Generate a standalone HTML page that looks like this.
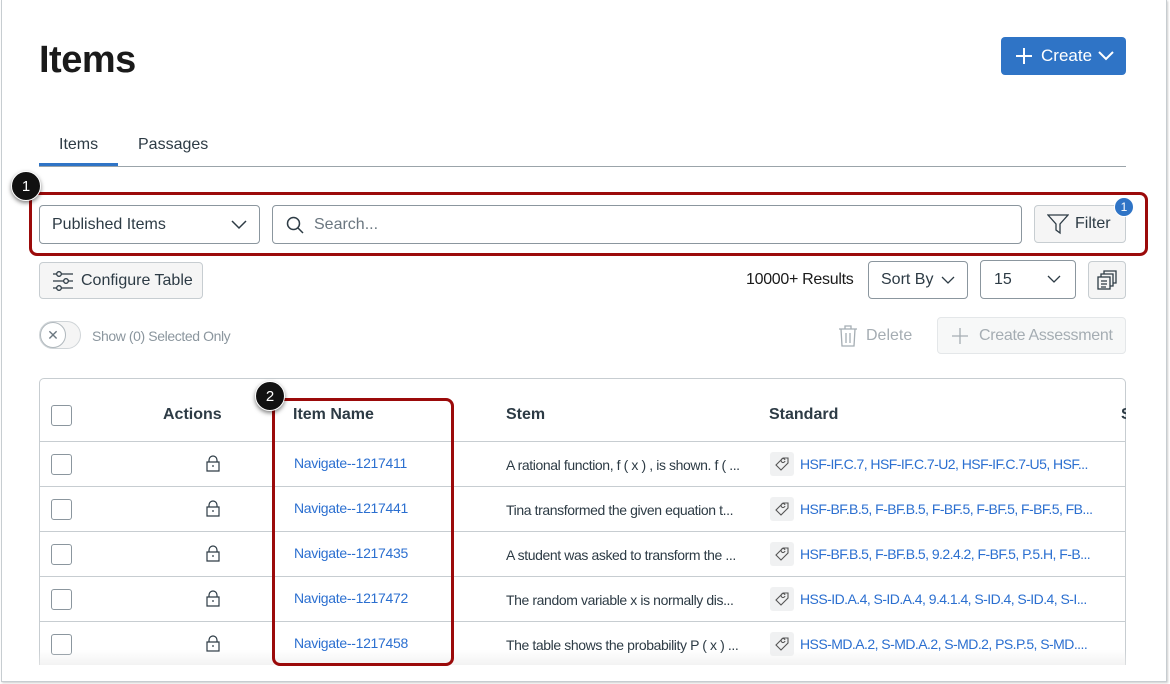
<!DOCTYPE html>
<html><head><style>
*{box-sizing:border-box;margin:0;padding:0}
html,body{width:1170px;height:684px;overflow:hidden}
body{background:#fff;font-family:"Liberation Sans",sans-serif;color:#2d3b45;position:relative}
.a{position:absolute}
.frame{left:1px;top:0;width:1166px;height:682px;border:1px solid #c7cdd1;border-top:none;box-shadow:1px 1px 2px rgba(0,0,0,.2)}
.btn{border:1px solid #c7cdd1;border-radius:4px;background:#f5f5f5;font-size:16px;display:flex;align-items:center}
.sel{border:1px solid #8b969e;border-radius:4px;background:#fff;font-size:16px;display:flex;align-items:center}
.badge{width:30px;height:30px;border-radius:50%;background:#111;color:#fff;font-size:15px;display:flex;align-items:center;justify-content:center;box-shadow:0 2px 4px rgba(0,0,0,.5);border:1.5px solid #fff}
.red{border:3px solid #9b0a0a;border-radius:8px}
.row{left:40px;width:1086px;height:44px;border-top:1px solid #c7cdd1}
.cb{position:absolute;left:11px;width:21px;height:21px;border:1px solid #8b969e;border-radius:3px;background:#fff}
.lnk{color:#2b6fd0;font-size:14px;letter-spacing:-0.3px}
.stem{font-size:14px;color:#2d3b45;letter-spacing:-0.4px}
.tag{width:24px;height:24px;background:#f0f1f2;border-radius:3px}
</style></head><body>
<div class="a frame"></div>
<div class="a" style="left:39px;top:39px;font-size:38px;font-weight:bold;color:#1a1a1a;letter-spacing:-0.5px">Items</div>
<div class="a" style="left:1001px;top:37px;width:125px;height:38px;background:#2f74c6;border-radius:4px;color:#fff;font-size:17px;display:flex;align-items:center;padding-left:14px">
<svg width="18" height="18" viewBox="0 0 18 18"><path d="M9 1v16M1 9h16" stroke="#fff" stroke-width="2"/></svg><span style="margin-left:8px">Create</span>
<svg width="16" height="10" viewBox="0 0 16 10" style="margin-left:6px"><path d="M1 1l7 7 7-7" stroke="#fff" stroke-width="2" fill="none"/></svg></div>
<div class="a" style="left:59px;top:136px;font-size:16px">Items</div>
<div class="a" style="left:138px;top:136px;font-size:16px">Passages</div>
<div class="a" style="left:39px;top:163px;width:79px;height:4px;background:#2f74c6"></div>
<div class="a" style="left:39px;top:166px;width:1087px;height:1px;background:#9ba4aa"></div>
<div class="a red" style="left:29px;top:192px;width:1119px;height:64px"></div>
<div class="a badge" style="left:11px;top:171px">1</div>
<div class="a sel" style="left:39px;top:205px;width:221px;height:39px;padding-left:12px;justify-content:space-between;padding-right:12px"><span>Published Items</span><svg width="16" height="10"><path d="M1 1l7 7 7-7" stroke="#2d3b45" stroke-width="1.5" fill="none"/></svg></div>
<div class="a sel" style="left:272px;top:205px;width:750px;height:39px;padding-left:13px;color:#6b7780"><svg width="18" height="18" viewBox="0 0 18 18"><circle cx="7.5" cy="7.5" r="6" stroke="#2d3b45" stroke-width="1.5" fill="none"/><path d="M12 12l5 5" stroke="#2d3b45" stroke-width="1.5"/></svg><span style="margin-left:10px">Search...</span></div>
<div class="a btn" style="left:1034px;top:205px;width:92px;height:38px;padding-left:12px"><svg width="22" height="22" viewBox="0 0 22 22"><path d="M1 2h20l-8 9v9l-4-3v-6z" stroke="#2d3b45" stroke-width="1.3" fill="none"/></svg><span style="margin-left:6px">Filter</span></div>
<div class="a" style="left:1114px;top:197px;width:20px;height:20px;border-radius:50%;background:#2f74c6;color:#fff;font-size:12px;display:flex;align-items:center;justify-content:center;border:1px solid #fff">1</div>
<div class="a btn" style="left:39px;top:262px;width:164px;height:37px;padding-left:12px"><svg width="22" height="20" viewBox="0 0 22 20"><path d="M1 3h20M1 10h20M1 17h20" stroke="#2d3b45" stroke-width="1.3"/><circle cx="7" cy="3" r="2.3" fill="#f5f5f5" stroke="#2d3b45" stroke-width="1.3"/><circle cx="14" cy="10" r="2.3" fill="#f5f5f5" stroke="#2d3b45" stroke-width="1.3"/><circle cx="7" cy="17" r="2.3" fill="#f5f5f5" stroke="#2d3b45" stroke-width="1.3"/></svg><span style="margin-left:7px;color:#2d3b45">Configure Table</span></div>
<div class="a" style="left:746px;top:271px;font-size:16px;color:#1a1a1a;letter-spacing:-0.3px">10000+ Results</div>
<div class="a sel" style="left:868px;top:261px;width:100px;height:38px;padding-left:12px"><span>Sort By</span><svg width="14" height="9" style="margin-left:8px"><path d="M1 1l6 6 6-6" stroke="#2d3b45" stroke-width="1.3" fill="none"/></svg></div>
<div class="a sel" style="left:980px;top:260px;width:96px;height:39px;padding:0 14px 0 13px;justify-content:space-between"><span>15</span><svg width="14" height="9"><path d="M1 1l6 6 6-6" stroke="#2d3b45" stroke-width="1.3" fill="none"/></svg></div>
<div class="a btn" style="left:1088px;top:261px;width:38px;height:38px;justify-content:center"><svg width="22" height="22" viewBox="0 0 22 22" fill="none" stroke="#2d3b45" stroke-width="1.3"><rect x="2" y="8" width="12" height="12"/><path d="M5 8V5h12v12h-3M8 5V2h12v12h-3"/><path d="M5 12h6M5 15h6M5 18h5"/></svg></div>
<div class="a" style="left:39px;top:321px;width:42px;height:28px;border-radius:14px;border:1px solid #d0d5d8;background:#f5f5f5"></div>
<div class="a" style="left:40px;top:322px;width:26px;height:26px;border-radius:50%;border:1px solid #b0b8bd;background:#fff;color:#6b7780;font-size:14px;display:flex;align-items:center;justify-content:center">✕</div>
<div class="a" style="left:92px;top:328px;font-size:14px;color:#8b969e;letter-spacing:-0.4px">Show (0) Selected Only</div>
<div class="a" style="left:838px;top:325px;font-size:16px;color:#a5adb3;display:flex;align-items:center"><svg width="20" height="22" viewBox="0 0 20 22" fill="none" stroke="#a5adb3" stroke-width="1.3"><path d="M1 4h18M7 4V1h6v3M3 4l1 17h12l1-17M8 8v10M12 8v10"/></svg><span style="margin-left:8px">Delete</span></div>
<div class="a" style="left:937px;top:317px;width:189px;height:37px;border:1px solid #e4e7e9;border-radius:4px;background:#f7f8f8;font-size:16px;color:#a5adb3;display:flex;align-items:center;padding-left:14px;letter-spacing:-0.3px"><svg width="16" height="16"><path d="M8 0v16M0 8h16" stroke="#a5adb3" stroke-width="1.3"/></svg><span style="margin-left:11px">Create Assessment</span></div>
<div class="a" style="left:39px;top:378px;width:1087px;height:288px;border:1px solid #c7cdd1;border-bottom:none;border-radius:5px 5px 0 0"></div>
<div class="a cb" style="left:51px;top:405px"></div>
<div class="a" style="left:163px;top:406px;font-size:16px;font-weight:bold">Actions</div>
<div class="a" style="left:293px;top:406px;font-size:16px;font-weight:bold">Item Name</div>
<div class="a" style="left:506px;top:406px;font-size:16px;font-weight:bold">Stem</div>
<div class="a" style="left:769px;top:406px;font-size:16px;font-weight:bold">Standard</div>
<div class="a" style="left:1121px;top:406px;font-size:16px;font-weight:bold;width:5px;overflow:hidden">S</div>

<div class="a row" style="top:441px"></div><div class="a row" style="top:486px"></div><div class="a row" style="top:531px"></div><div class="a row" style="top:576px"></div><div class="a row" style="top:621px"></div>

<div class="a cb" style="left:51px;top:454px"></div><div class="a cb" style="left:51px;top:499px"></div><div class="a cb" style="left:51px;top:544px"></div><div class="a cb" style="left:51px;top:589px"></div><div class="a cb" style="left:51px;top:634px"></div>

<svg class="a" style="left:205px;top:455px" width="16" height="200"><g fill="none" stroke="#2d3b45" stroke-width="1.2">
<path d="M4 7V5a4 4 0 018 0v2M2 7h12v9H2zM8 10v2"/>
<path transform="translate(0,45)" d="M4 7V5a4 4 0 018 0v2M2 7h12v9H2zM8 10v2"/>
<path transform="translate(0,90)" d="M4 7V5a4 4 0 018 0v2M2 7h12v9H2zM8 10v2"/>
<path transform="translate(0,135)" d="M4 7V5a4 4 0 018 0v2M2 7h12v9H2zM8 10v2"/>
<path transform="translate(0,180)" d="M4 7V5a4 4 0 018 0v2M2 7h12v9H2zM8 10v2"/></g></svg>

<div class="a lnk" style="left:294px;top:455px">Navigate--1217411</div>
<div class="a lnk" style="left:294px;top:500px">Navigate--1217441</div>
<div class="a lnk" style="left:294px;top:545px">Navigate--1217435</div>
<div class="a lnk" style="left:294px;top:590px">Navigate--1217472</div>
<div class="a lnk" style="left:294px;top:635px">Navigate--1217458</div>

<div class="a stem" style="left:506px;top:457px">A rational function, f ( x ) , is shown. f ( ...</div>
<div class="a stem" style="left:506px;top:502px">Tina transformed the given equation t...</div>
<div class="a stem" style="left:506px;top:547px">A student was asked to transform the ...</div>
<div class="a stem" style="left:506px;top:592px">The random variable x is normally dis...</div>
<div class="a stem" style="left:506px;top:637px">The table shows the probability P ( x ) ...</div>

<div class="a tag" style="left:770px;top:452px"></div><div class="a tag" style="left:770px;top:497px"></div><div class="a tag" style="left:770px;top:542px"></div><div class="a tag" style="left:770px;top:587px"></div><div class="a tag" style="left:770px;top:632px"></div>
<svg class="a" style="left:774px;top:455px" width="18" height="200"><g fill="none" stroke="#555" stroke-width="1.1">
<path d="M2 10l7-7h5v5l-7 7zM11 6a2 2 0 110-1"/>
<path transform="translate(0,45)" d="M2 10l7-7h5v5l-7 7zM11 6a2 2 0 110-1"/>
<path transform="translate(0,90)" d="M2 10l7-7h5v5l-7 7zM11 6a2 2 0 110-1"/>
<path transform="translate(0,135)" d="M2 10l7-7h5v5l-7 7zM11 6a2 2 0 110-1"/>
<path transform="translate(0,180)" d="M2 10l7-7h5v5l-7 7zM11 6a2 2 0 110-1"/></g></svg>
<div class="a lnk" style="left:800px;top:456px;letter-spacing:-0.55px">HSF-IF.C.7, HSF-IF.C.7-U2, HSF-IF.C.7-U5, HSF...</div>
<div class="a lnk" style="left:800px;top:501px;letter-spacing:-0.55px">HSF-BF.B.5, F-BF.B.5, F-BF.5, F-BF.5, F-BF.5, FB...</div>
<div class="a lnk" style="left:800px;top:546px;letter-spacing:-0.55px">HSF-BF.B.5, F-BF.B.5, 9.2.4.2, F-BF.5, P.5.H, F-B...</div>
<div class="a lnk" style="left:800px;top:591px;letter-spacing:-0.55px">HSS-ID.A.4, S-ID.A.4, 9.4.1.4, S-ID.4, S-ID.4, S-I...</div>
<div class="a lnk" style="left:800px;top:636px;letter-spacing:-0.55px">HSS-MD.A.2, S-MD.A.2, S-MD.2, PS.P.5, S-MD....</div>

<div class="a" style="left:2px;top:665px;width:1164px;height:16px;background:#fff"></div>
<div class="a" style="left:39px;top:650px;width:1087px;height:15px;background:linear-gradient(rgba(255,255,255,0),rgba(235,235,235,.6))"></div>

<div class="a red" style="left:272px;top:398px;width:182px;height:268px"></div>
<div class="a badge" style="left:255px;top:381px">2</div>
</body></html>
